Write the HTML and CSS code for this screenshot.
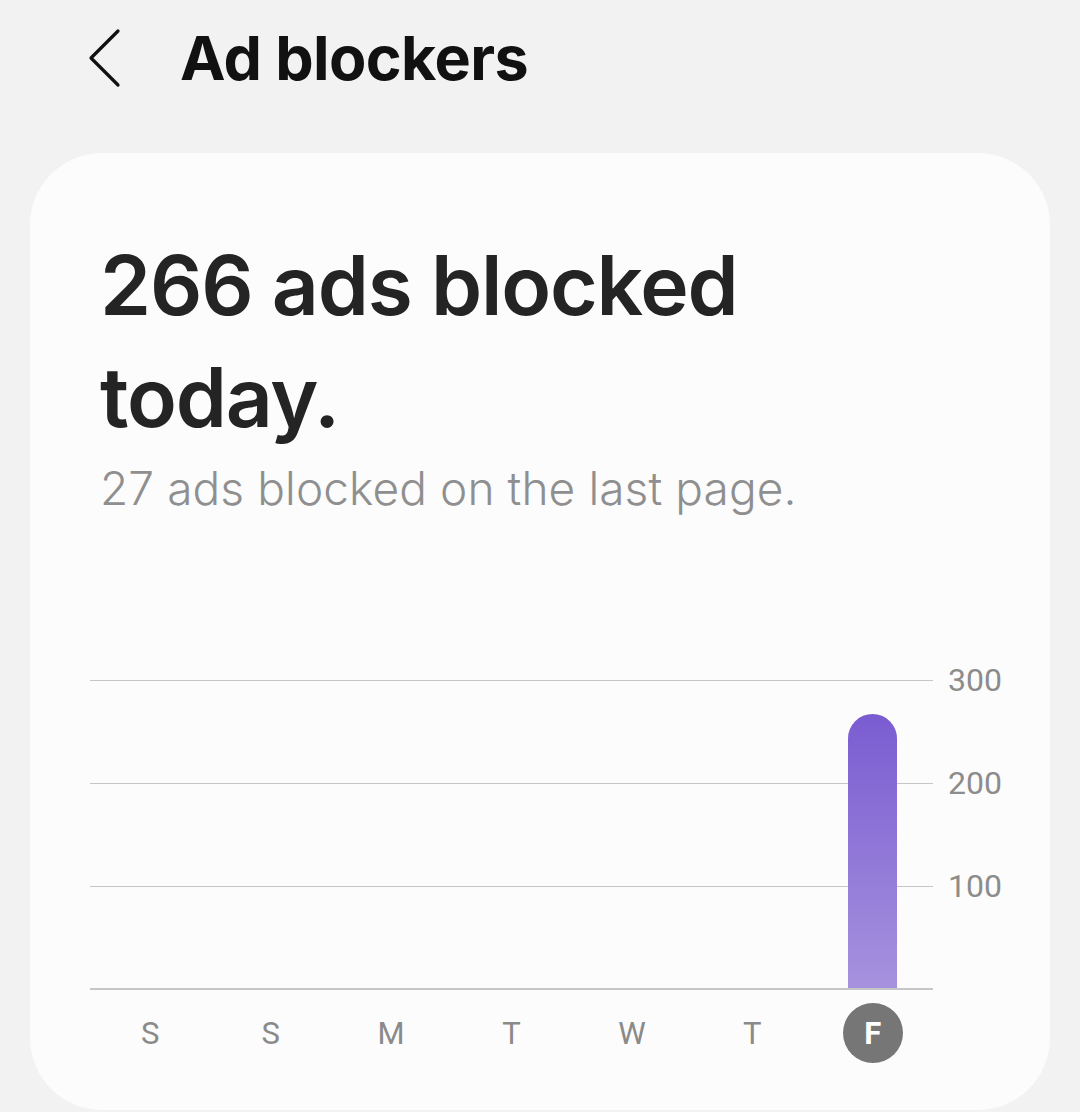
FILE: index.html
```html
<!DOCTYPE html>
<html>
<head>
<meta charset="utf-8">
<link rel="stylesheet" href="styles.css">
</head>
<body>
<header class="topbar">
  <svg class="back" width="34" height="60" viewBox="0 0 34 60"><polyline points="30,3 3,30 30,57" fill="none" stroke="#111" stroke-width="3.2" stroke-linecap="round" stroke-linejoin="round"/></svg>
  <h1 class="title">Ad blockers</h1>
</header>
<main class="card">
  <h2 class="headline">266 ads blocked today.</h2>
  <p class="sub">27 ads blocked on the last page.</p>
  <section class="chart">
    <div class="plot-wrap">
      <div class="plot">
        <div class="grid-row"></div>
        <div class="grid-row"></div>
        <div class="grid-row"></div>
        <div class="bars">
          <div class="bar-col"></div>
          <div class="bar-col"></div>
          <div class="bar-col"></div>
          <div class="bar-col"></div>
          <div class="bar-col"></div>
          <div class="bar-col"></div>
          <div class="bar-col"><div class="bar" style="height: 274px"></div></div>
        </div>
      </div>
      <div class="axis">
        <span class="tick">300</span>
        <span class="tick">200</span>
        <span class="tick">100</span>
      </div>
    </div>
    <div class="days">
      <span class="day">S</span>
      <span class="day">S</span>
      <span class="day">M</span>
      <span class="day">T</span>
      <span class="day">W</span>
      <span class="day">T</span>
      <span class="day"><span class="today">F</span></span>
    </div>
  </section>
</main>
</body>
</html>
```
FILE: styles.css
```css
* { box-sizing: border-box; }
html, body { margin: 0; padding: 0; }
body {
  background: #f2f2f2;
  font-family: "Inter", "Noto Sans", sans-serif;
  color: #222;
  width: 1080px;
  height: 1112px;
  overflow: hidden;
}
.topbar {
  height: 153px;
  display: flex;
  align-items: flex-start;
  padding: 20px 0 0 88px;
}
.back { margin-top: 8px; }
.title {
  margin: 0 0 0 58px;
  font-size: 61px;
  line-height: 76px;
  font-weight: 700;
  letter-spacing: -0.6px;
  color: #111;
}
.card {
  margin-left: 30px;
  width: 1020px;
  height: 957px;
  background: #fcfcfc;
  border-radius: 72px;
  padding: 77px 0 0 70px;
}
.headline {
  margin: 0;
  width: 700px;
  font-size: 82px;
  line-height: 112px;
  font-weight: 600;
  letter-spacing: -1.2px;
  color: #242424;
}
.sub {
  margin: 6px 0 0;
  font-size: 46px;
  line-height: 56px;
  font-weight: 300;
  color: #8f8f8f;
  letter-spacing: 0.1px;
}
.chart {
  margin: 164px 0 0 -10px;
}
.plot-wrap {
  display: flex;
}
.plot {
  position: relative;
  width: 843px;
  height: 310px;
  border-bottom: 2px solid #c6c6c6;
}
.grid-row {
  height: 103px;
  border-top: 1.5px solid #c6c6c6;
}
.bars {
  position: absolute;
  inset: 0;
  display: grid;
  grid-template-columns: repeat(7, 1fr);
  align-items: end;
}
.bar-col {
  display: flex;
  justify-content: center;
  align-items: flex-end;
  height: 100%;
}
.bar {
  width: 49px;
  border-radius: 25px 25px 0 0;
  background: linear-gradient(to bottom, #7a5cd1, #a692de);
}
.axis {
  display: flex;
  flex-direction: column;
  margin-top: -51px;
  padding-left: 15px;
}
.tick {
  height: 103px;
  line-height: 103px;
  font-family: "Roboto", sans-serif;
  font-size: 32px;
  color: #8c8c8c;
}
.days {
  width: 843px;
  height: 86px;
  display: grid;
  grid-template-columns: repeat(7, 1fr);
  align-items: center;
  justify-items: center;
}
.day {
  font-family: "Roboto", sans-serif;
  font-size: 31px;
  color: #8a8a8a;
}
.today {
  width: 60px;
  height: 60px;
  border-radius: 50%;
  background: #767676;
  color: #fff;
  font-weight: 700;
  display: flex;
  align-items: center;
  justify-content: center;
}
```
